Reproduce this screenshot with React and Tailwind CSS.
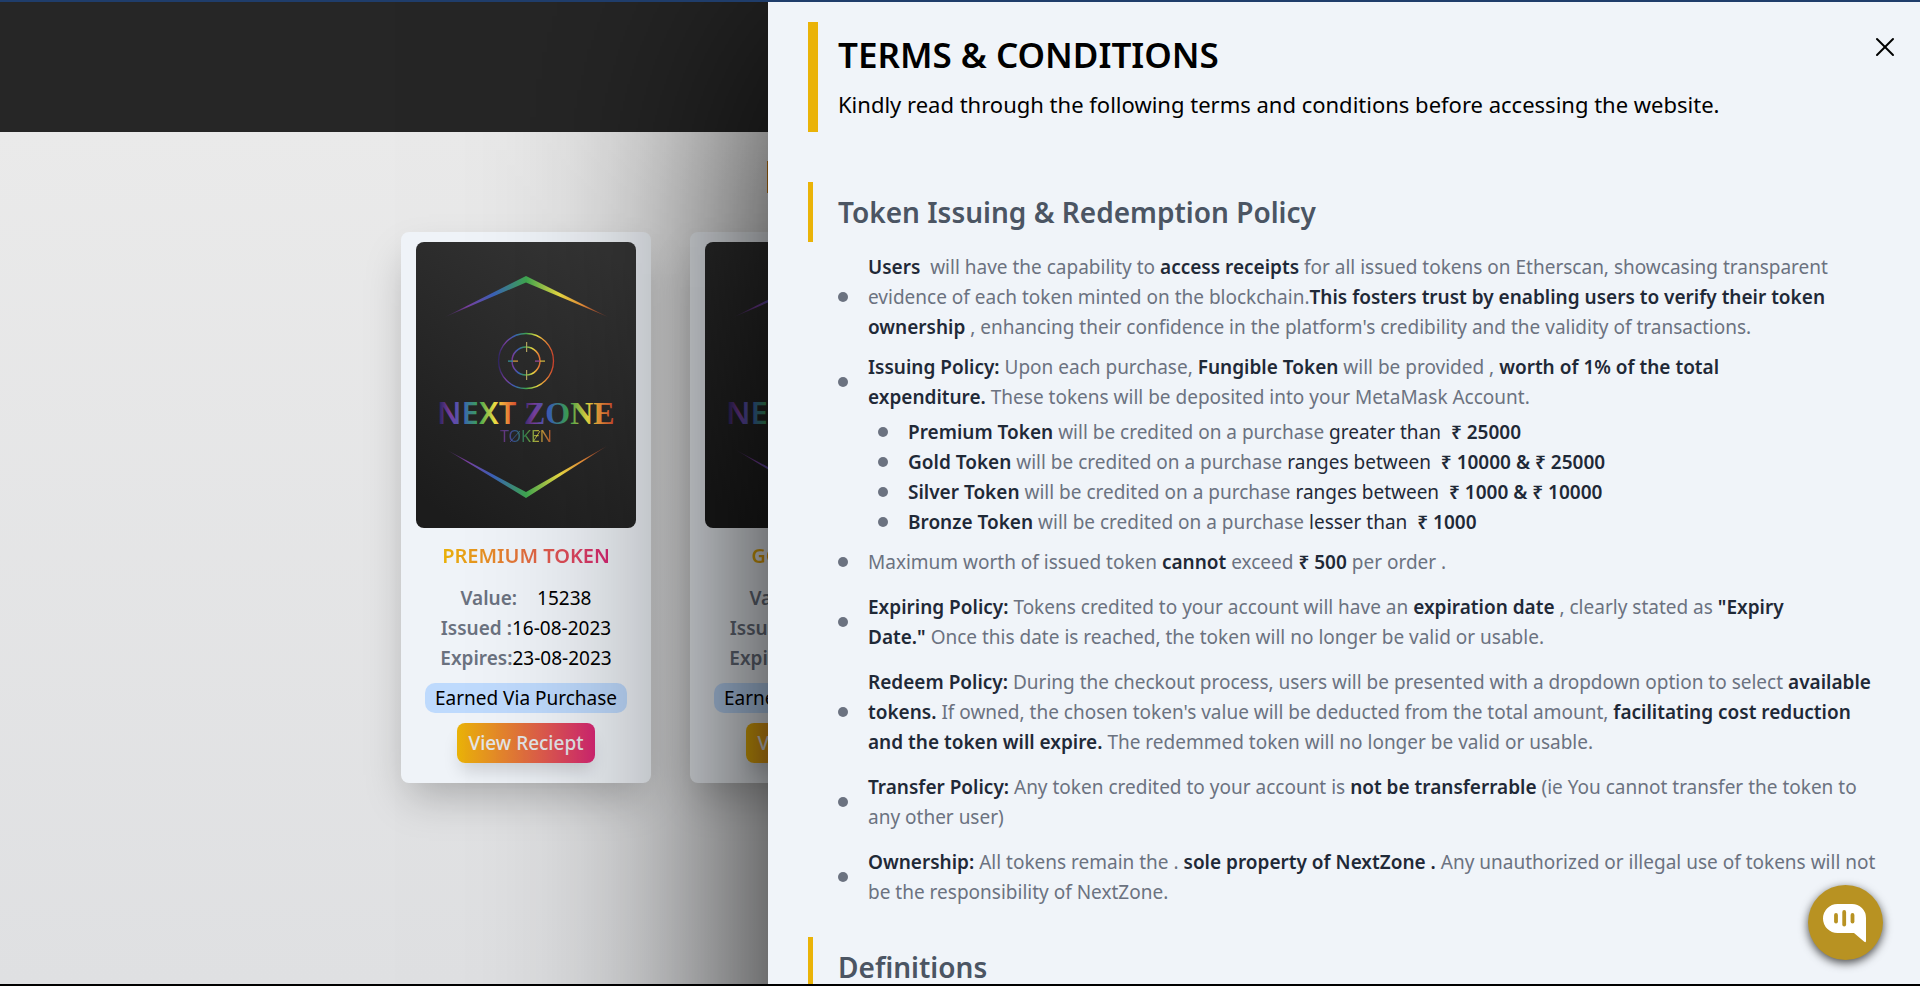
import React from 'react';
import { X } from 'lucide-react';

const tokens = [
  { name: 'PREMIUM TOKEN', value: '15238', issued: '16-08-2023', expires: '23-08-2023' },
  { name: 'GOLD TOKEN', value: '15238', issued: '16-08-2023', expires: '23-08-2023' },
];

function Rainbow({ id, x1, x2 }) {
  return (
    <linearGradient id={id} gradientUnits="userSpaceOnUse" x1={x1} y1="0" x2={x2} y2="0">
      <stop offset="0" stopColor="#2c2560" />
      <stop offset="0.14" stopColor="#7a3fa0" />
      <stop offset="0.3" stopColor="#3a62b8" />
      <stop offset="0.5" stopColor="#3fa850" />
      <stop offset="0.7" stopColor="#efe044" />
      <stop offset="0.84" stopColor="#f0923a" />
      <stop offset="1" stopColor="#d2402e" />
    </linearGradient>
  );
}

function TokenArt({ id }) {
  const ref = (name) => `url(#${id}-${name})`;
  return (
    <svg viewBox="0 0 220 286" className="block h-[286px] w-[220px] rounded-lg" role="img" aria-label="NextZone token">
      <defs>
        <linearGradient id={`${id}-bg`} x1="0.8" y1="0" x2="0.2" y2="1">
          <stop offset="0" stopColor="#363636" />
          <stop offset="1" stopColor="#1d1d1d" />
        </linearGradient>
        <linearGradient id={`${id}-edge`} gradientUnits="userSpaceOnUse" x1="28" y1="0" x2="193" y2="0">
          <stop offset="0" stopColor="#5b2f86" stopOpacity="0.2" />
          <stop offset="0.14" stopColor="#7a3fa0" />
          <stop offset="0.3" stopColor="#3a62b8" />
          <stop offset="0.5" stopColor="#3fa850" />
          <stop offset="0.7" stopColor="#efe044" />
          <stop offset="0.84" stopColor="#f0923a" />
          <stop offset="1" stopColor="#d2402e" stopOpacity="0.3" />
        </linearGradient>
        <Rainbow id={`${id}-ring`} x1="82" x2="138" />
        <Rainbow id={`${id}-core`} x1="92" x2="127" />
        <Rainbow id={`${id}-next`} x1="23" x2="103" />
        <Rainbow id={`${id}-zone`} x1="105" x2="200" />
        <Rainbow id={`${id}-token`} x1="80" x2="140" />
      </defs>
      <rect width="220" height="286" fill={ref('bg')} />
      <path d="M29 75 L110 34 L192 75 L110 40.500 Z" fill={ref('edge')} />
      <path d="M31 208 L110 250 L191 204 L110 256 Z" fill={ref('edge')} />
      <circle cx="110" cy="119" r="27.500" fill="none" stroke={ref('ring')} strokeWidth="1.300" />
      <circle cx="110" cy="119" r="14" fill="none" stroke={ref('core')} strokeWidth="1.500" />
      <rect x="110" y="100" width="1.200" height="10" fill="#b5a560" />
      <rect x="110" y="128" width="1.200" height="10" fill="#b5a560" />
      <rect x="92" y="118.500" width="5" height="1.200" fill="#3a9aa0" />
      <rect x="97" y="118.500" width="5" height="1.200" fill="#e0a040" />
      <rect x="119" y="118.500" width="5" height="1.200" fill="#a04fa0" />
      <rect x="124" y="118.500" width="5" height="1.200" fill="#e0c040" />
      <text x="21" y="182" fontSize="31" fontWeight="600" className="font-['Noto_Sans',sans-serif]" fill={ref('next')}>NEXT</text>
      <text x="108" y="182" fontSize="32" fontWeight="700" className="font-['Liberation_Serif',serif]" fill={ref('zone')}>ZONE</text>
      <text x="84" y="200" fontSize="16" fontWeight="400" className="font-['Noto_Sans',sans-serif]" fill={ref('token')} opacity="0.75">TOKEN</text>
      <path d="M94 200 L104 189 M117 200 L124 189" stroke={ref('token')} strokeWidth="1" opacity="0.75" />
    </svg>
  );
}

function TokenCard({ token, id }) {
  return (
    <article className="flex shrink-0 flex-col items-center rounded-lg bg-[#f0f4f9] px-[15px] pt-[10px] pb-5 shadow-[0_20px_40px_-8px_rgba(0,0,0,0.25)]">
      <TokenArt id={id} />
      <h3 className="mt-[10px] bg-linear-to-r/srgb from-[#eab308] to-[#db2777] bg-clip-text text-xl leading-[35px] font-semibold text-transparent">
        {token.name}
      </h3>
      <dl className="mt-[10px] leading-[30px]">
        <div className="flex justify-center gap-5">
          <dt className="font-semibold text-[#6b7280]">Value:</dt>
          <dd>{token.value}</dd>
        </div>
        <div className="flex justify-center">
          <dt className="font-semibold text-[#6b7280]">Issued :</dt>
          <dd>{token.issued}</dd>
        </div>
        <div className="flex justify-center">
          <dt className="font-semibold text-[#6b7280]">Expires:</dt>
          <dd>{token.expires}</dd>
        </div>
      </dl>
      <p className="mt-[10px] rounded-[10px] bg-[#bfdbfe] px-[10px] leading-[30px]">Earned Via Purchase</p>
      <button
        type="button"
        className="mt-[10px] h-10 rounded-lg bg-linear-to-r/srgb from-[#eab308] to-[#db2777] px-3 font-medium text-[#e5e7eb] shadow-[0_12px_18px_-4px_rgba(0,0,0,0.15)]"
      >
        View Reciept
      </button>
    </article>
  );
}

const B = ({ children }) => <strong className="font-semibold text-[#1f2937]">{children}</strong>;
const Dark = ({ children }) => <span className="text-[#1f2937]">{children}</span>;
const Br = () => <br className="hidden 2xl:inline" />;

function Item({ children }) {
  return (
    <li className="flex items-center gap-5">
      <span className="size-[10px] shrink-0 rounded-full bg-[#6b7280]" />
      <p>{children}</p>
    </li>
  );
}

function SectionTitle({ children }) {
  return (
    <h2 className="border-l-[5px] border-[#eab308] py-[10px] pl-[25px] text-[28px] leading-10 font-semibold text-[#4b5563]">
      {children}
    </h2>
  );
}

function TermsPanel() {
  return (
    <section
      role="dialog"
      aria-labelledby="terms-title"
      className="absolute top-0 right-0 min-h-[150%] w-3/5 bg-[#f0f4f9] pt-5 pr-5 pl-10 shadow-[0_0_250px_#000]"
    >
      <button type="button" aria-label="Close" className="absolute top-[29px] right-[19px]">
        <X size={32} strokeWidth={1.5} />
      </button>
      <header className="border-l-[10px] border-[#eab308] py-[10px] pl-5">
        <h1 id="terms-title" className="text-[35px] leading-[45px] font-semibold">TERMS &amp; CONDITIONS</h1>
        <p className="mt-[10px] text-[22px] leading-[35px]">
          Kindly read through the following terms and conditions before accessing the website.
        </p>
      </header>
      <div className="mt-[50px]">
        <SectionTitle>Token Issuing &amp; Redemption Policy</SectionTitle>
        <ul className="mt-[10px] mb-[30px] flex flex-col gap-[15px] pl-[30px] leading-[30px] text-[#6b7280]">
          <li>
            <ul className="flex flex-col gap-[10px]">
              <Item>
                <B>Users</B> &nbsp;will have the capability to <B>access receipts</B> for all issued tokens on Etherscan, showcasing transparent <Br />
                evidence of each token minted on the blockchain.<B>This fosters trust by enabling users to verify their token <Br />
                ownership</B> , enhancing their confidence in the platform's credibility and the validity of transactions.
              </Item>
              <Item>
                <B>Issuing Policy:</B> Upon each purchase, <B>Fungible Token</B> will be provided , <B>worth of 1% of the total <Br />
                expenditure.</B> These tokens will be deposited into your MetaMask Account.
              </Item>
            </ul>
            <ul className="mt-[5px] mb-[10px] pl-10">
              <Item><B>Premium Token</B> will be credited on a purchase <Dark>greater than</Dark> &nbsp;<B>₹ 25000</B></Item>
              <Item><B>Gold Token</B> will be credited on a purchase <Dark>ranges between</Dark> &nbsp;<B>₹ 10000 &amp; ₹ 25000</B></Item>
              <Item><B>Silver Token</B> will be credited on a purchase <Dark>ranges between</Dark> &nbsp;<B>₹ 1000 &amp; ₹ 10000</B></Item>
              <Item><B>Bronze Token</B> will be credited on a purchase <Dark>lesser than</Dark> &nbsp;<B>₹ 1000</B></Item>
            </ul>
            <ul>
              <Item>Maximum worth of issued token <B>cannot</B> exceed <B>₹ 500</B> per order .</Item>
            </ul>
          </li>
          <Item>
            <B>Expiring Policy:</B> Tokens credited to your account will have an <B>expiration date</B> , clearly stated as <B>"Expiry <Br />
            Date."</B> Once this date is reached, the token will no longer be valid or usable.
          </Item>
          <Item>
            <B>Redeem Policy:</B> During the checkout process, users will be presented with a dropdown option to select <B>available <Br />
            tokens.</B> If owned, the chosen token's value will be deducted from the total amount, <B>facilitating cost reduction <Br />
            and the token will expire.</B> The redemmed token will no longer be valid or usable.
          </Item>
          <Item>
            <B>Transfer Policy:</B> Any token credited to your account is <B>not be transferrable</B> (ie You cannot transfer the token to <Br />
            any other user)
          </Item>
          <Item>
            <B>Ownership:</B> All tokens remain the . <B>sole property of NextZone .</B> Any unauthorized or illegal use of tokens will not <Br />
            be the responsibility of NextZone.
          </Item>
        </ul>
        <SectionTitle>Definitions</SectionTitle>
      </div>
    </section>
  );
}

function ChatButton() {
  return (
    <button
      type="button"
      aria-label="Open chat"
      className="absolute right-[37px] bottom-6 size-[75px] rounded-full bg-[#b89222] shadow-[0_3px_10px_rgba(0,0,0,0.7)]"
    >
      <svg viewBox="0 0 75 75" className="size-full">
        <path d="M29.500 19 H44 A14 14 0 0 1 58 33 V56 Q58 58 56 56.500 L46 48 H29.500 A14.500 14.500 0 0 1 29.500 19 Z" fill="#fff" />
        <g stroke="#b89222" strokeWidth="3.800" strokeLinecap="round">
          <path d="M28 30 V36.500" />
          <path d="M36.200 27 V39.500" />
          <path d="M44.500 30 V36.500" />
        </g>
      </svg>
    </button>
  );
}

export default function App() {
  return (
    <div className="relative flex h-screen flex-col overflow-hidden border-t-2 border-b-2 border-t-[#1f3d6b] border-b-black font-['Noto_Sans',sans-serif] text-[19px] text-black">
      <header className="h-[130px] shrink-0 bg-[#262626]" />
      <main className="grow bg-linear-to-b from-[#eaeaea] to-[#dfe0e2]">
        <div className="mx-auto mt-[29px] h-8 w-[386px] max-w-full bg-linear-to-r from-[#c87a10] to-[#db2777]" />
        <div className="mt-[39px] flex gap-[39px] pl-[401px]">
          {tokens.map((token, i) => (
            <TokenCard key={token.name} token={token} id={`token-${i}`} />
          ))}
        </div>
      </main>
      <TermsPanel />
      <ChatButton />
    </div>
  );
}
